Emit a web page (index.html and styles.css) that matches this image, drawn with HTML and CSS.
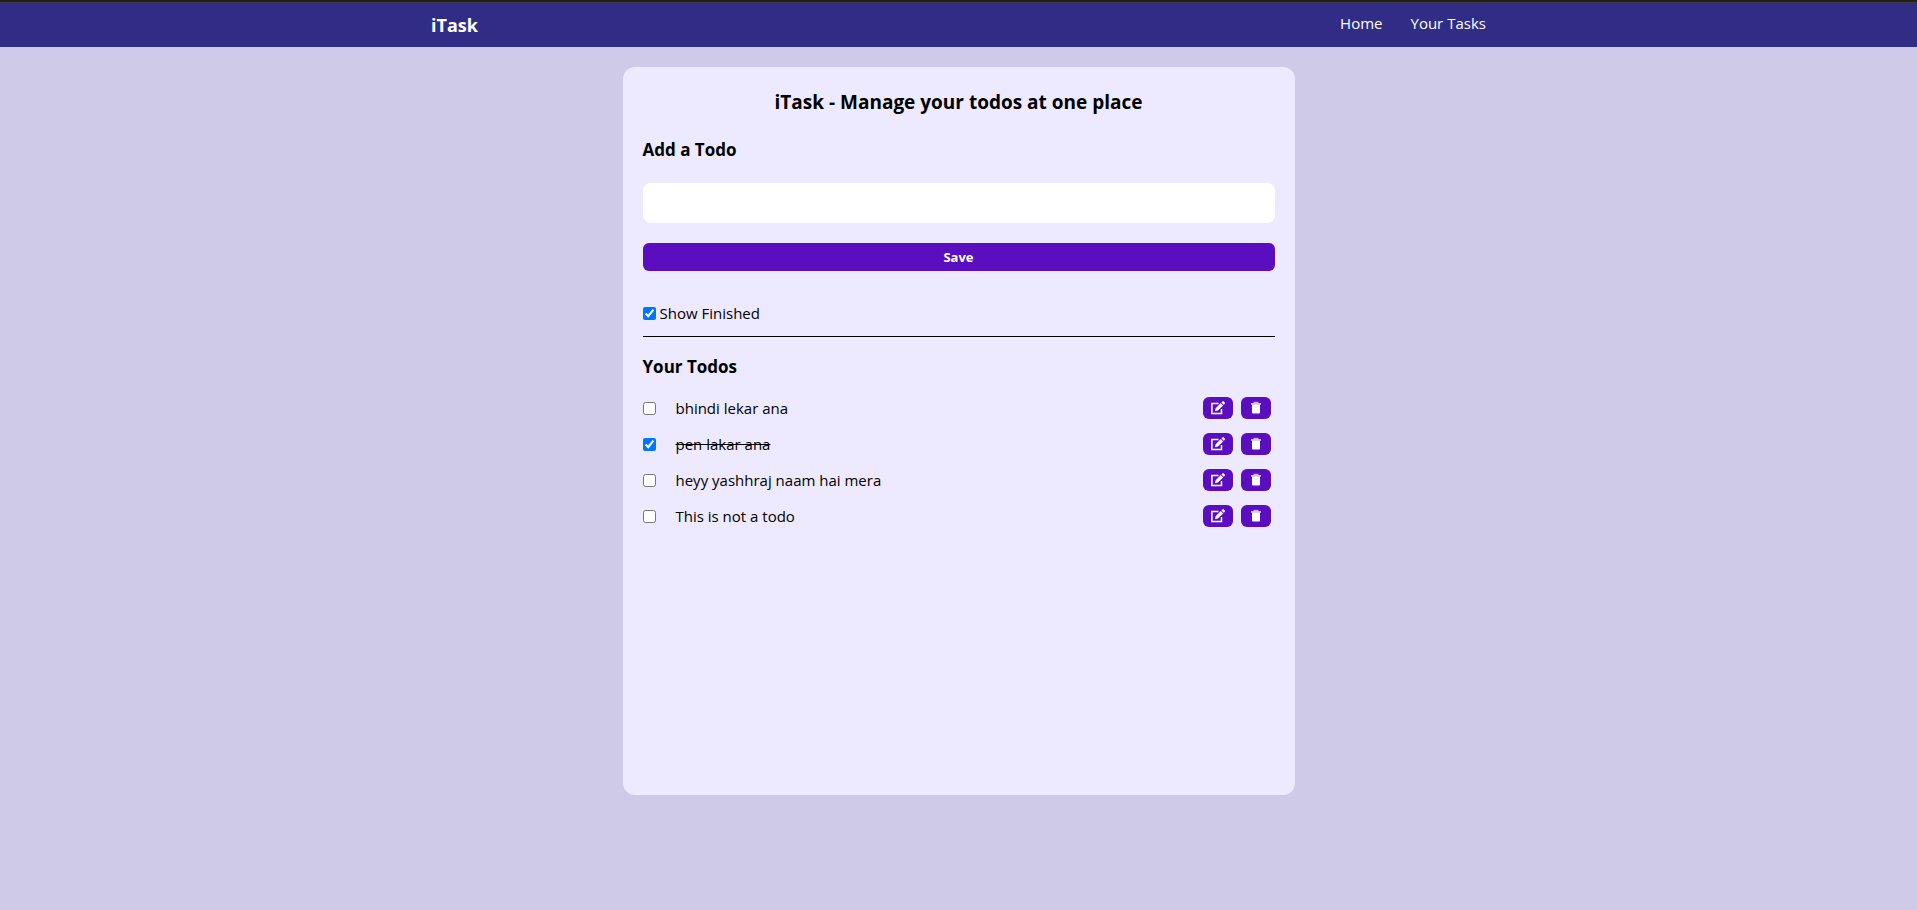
FILE: index.html
```html
<!DOCTYPE html>
<html lang="en">
<head>
<meta charset="utf-8">
<meta name="viewport" content="width=device-width, initial-scale=1">
<title>iTask</title>
<link rel="stylesheet" href="styles.css">
</head>
<body>
<svg class="sprite" aria-hidden="true">
  <symbol id="edit" viewBox="0 0 14 14">
    <path d="M7.500 2.500H.9v10h9.600V8" fill="none" stroke="currentColor" stroke-width="1.500"/>
    <path d="M4 10.200l.6-2.900 5.200-5.200 2.300 2.300-5.200 5.200zM10.400 1.500l1-1c.4-.4 1-.4 1.400 0l.9.9c.4.4.4 1 0 1.400l-1 1z" fill="currentColor"/>
  </symbol>
  <symbol id="trash" viewBox="0 0 14 14">
    <path d="M4.500.8h5v1.700h-5z" fill="currentColor" opacity=".65"/>
    <path d="M2 2.200h10v1.500H2z" fill="currentColor" opacity=".85"/>
    <path d="M3 3.500h8V11.500a1 1 0 0 1-1 1H4a1 1 0 0 1-1-1z" fill="currentColor"/>
  </symbol>
</svg>
<nav class="navbar">
  <span class="logo">iTask</span>
  <ul class="links">
    <li><a href="#home">Home</a></li>
    <li><a href="#tasks">Your Tasks</a></li>
  </ul>
</nav>
<main class="card">
  <h1 class="title">iTask - Manage your todos at one place</h1>
  <form class="add">
    <h2 class="heading"><label for="todo">Add a Todo</label></h2>
    <input class="field" id="todo" type="text">
    <button class="save" type="button">Save</button>
  </form>
  <div class="filter">
    <input class="check" id="finished" type="checkbox" checked>
    <label for="finished">Show Finished</label>
  </div>
  <h2 class="heading">Your Todos</h2>
  <ul class="todos">
    <li class="todo">
      <input class="check" id="t1" type="checkbox"><label class="text" for="t1">bhindi lekar ana</label>
      <button class="action" type="button" aria-label="Edit"><svg class="icon"><use href="#edit"/></svg></button>
      <button class="action" type="button" aria-label="Delete"><svg class="icon"><use href="#trash"/></svg></button>
    </li>
    <li class="todo">
      <input class="check" id="t2" type="checkbox" checked><label class="text done" for="t2">pen lakar ana</label>
      <button class="action" type="button" aria-label="Edit"><svg class="icon"><use href="#edit"/></svg></button>
      <button class="action" type="button" aria-label="Delete"><svg class="icon"><use href="#trash"/></svg></button>
    </li>
    <li class="todo">
      <input class="check" id="t3" type="checkbox"><label class="text" for="t3">heyy yashhraj naam hai mera</label>
      <button class="action" type="button" aria-label="Edit"><svg class="icon"><use href="#edit"/></svg></button>
      <button class="action" type="button" aria-label="Delete"><svg class="icon"><use href="#trash"/></svg></button>
    </li>
    <li class="todo">
      <input class="check" id="t4" type="checkbox"><label class="text" for="t4">This is not a todo</label>
      <button class="action" type="button" aria-label="Edit"><svg class="icon"><use href="#edit"/></svg></button>
      <button class="action" type="button" aria-label="Delete"><svg class="icon"><use href="#trash"/></svg></button>
    </li>
  </ul>
</main>
</body>
</html>
```
FILE: styles.css
```css
* {
  box-sizing: border-box;
  margin: 0;
  padding: 0;
}

body {
  min-height: 100vh;
  background: #cfcae7;
  border-top: 2px solid #202020;
  color: #000;
  font: 15px/24px "Segoe UI", "Open Sans", "Noto Sans", sans-serif;
}

.sprite {
  display: none;
}

.navbar {
  display: flex;
  justify-content: space-around;
  padding: 8px 0 12px;
  border-top: 1px solid #3b3b42;
  background: #312c85;
  color: #fff;
}

.logo {
  padding-top: 4px;
  font-size: 18px;
  font-weight: 700;
  line-height: 20px;
}

.links {
  display: flex;
  gap: 28px;
  list-style: none;
}

.links a {
  color: inherit;
  text-decoration: none;
}

.card {
  width: 90%;
  max-width: 672px;
  min-height: 80vh;
  margin: 20px auto 0;
  padding: 20px;
  border-radius: 12px;
  background: #ede9fe;
}

.title {
  margin-bottom: 20px;
  font-size: 19px;
  font-weight: 700;
  line-height: 30px;
  text-align: center;
}

.heading {
  font-size: 17px;
  font-weight: 700;
  line-height: 26px;
}

.add {
  display: flex;
  flex-direction: column;
  gap: 20px;
}

.field {
  width: 100%;
  height: 40px;
  padding: 0 12px;
  border: 0;
  border-radius: 8px;
  background: #fff;
  font: inherit;
}

.save {
  height: 28px;
  border: 0;
  border-radius: 6px;
  background: #5b0ec0;
  color: #fff;
  font: 700 13px/20px "Segoe UI", "Open Sans", "Noto Sans", sans-serif;
}

.filter {
  display: flex;
  align-items: center;
  gap: 4px;
  margin: 30px 0 17px;
  padding-bottom: 11px;
  border-bottom: 1px solid #000;
}

.check {
  flex: none;
  width: 13px;
  height: 13px;
}

.todos {
  display: grid;
  gap: 12px;
  margin-top: 16px;
  padding-right: 4px;
  list-style: none;
}

.todo {
  display: flex;
  align-items: center;
  gap: 8px;
}

.text {
  flex: 1;
  padding-left: 12px;
}

.done {
  text-decoration: line-through;
}

.action {
  display: grid;
  place-items: center;
  width: 30px;
  height: 22px;
  border: 0;
  border-radius: 6px;
  background: #5b0ec0;
  color: #fff;
}

.icon {
  width: 14px;
  height: 14px;
}
```
